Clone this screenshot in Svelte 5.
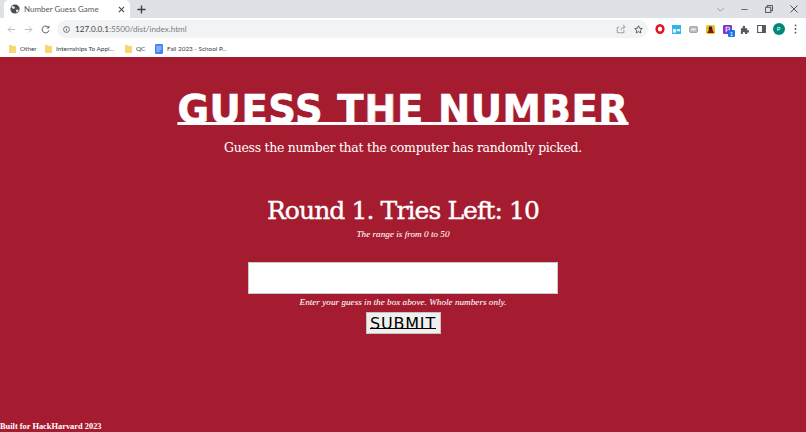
<script>
	const bookmarks = [
		{ label: 'Other', kind: 'folder', width: 36 },
		{ label: 'Internships To Appl...', kind: 'folder', width: 80 },
		{ label: 'QC', kind: 'folder', width: 30 },
		{ label: 'Fall 2023 - School P...', kind: 'doc', width: 80 }
	];
</script>

<div class="window">
	<div class="tabstrip">
		<div class="tab">
			<svg class="globe" viewBox="0 0 12 12" width="10" height="10">
				<circle cx="6" cy="6" r="5.5" fill="#4a4d52" />
				<path d="M3 2.5l2 .5 1 1.5-1 1.5-2-.5-1.5-1.5zM7 7l2.5-.5 1 1-2 3-1-1z" fill="#e8eaed" />
			</svg>
			<span class="tab-title">Number Guess Game</span>
			<svg class="tab-close" viewBox="0 0 8 8" width="7" height="7">
				<path d="M1 1l6 6M7 1L1 7" stroke="#4a4d52" stroke-width="1.3" />
			</svg>
		</div>
		<svg class="new-tab" viewBox="0 0 10 10" width="9" height="9">
			<path d="M5 .5v9M.5 5h9" stroke="#3c4043" stroke-width="1.5" />
		</svg>
		<div class="window-controls">
			<span class="ctl"><svg viewBox="0 0 10 6" width="9" height="5"><path d="M1 1l4 4 4-4" fill="none" stroke="#8a8d91" stroke-width="1" /></svg></span>
			<span class="ctl"><svg viewBox="0 0 8 8" width="7" height="7"><path d="M.5 4h7" stroke="#55585c" stroke-width="1" /></svg></span>
			<span class="ctl"><svg viewBox="0 0 9 9" width="8" height="8"><path d="M.5 2.5h6v6h-6zM2.5 2.5v-2h6v6h-2" fill="none" stroke="#3c4043" stroke-width="1" /></svg></span>
			<span class="ctl"><svg viewBox="0 0 9 9" width="8" height="8"><path d="M.5.5l8 8M8.500.5l-8 8" stroke="#3c4043" stroke-width="1" /></svg></span>
		</div>
	</div>

	<div class="toolbar">
		<span class="nav"><svg viewBox="0 0 12 12" width="9" height="9"><path d="M11 6H1.5M5.5 2L1.5 6l4 4" fill="none" stroke="#b4b7bb" stroke-width="1.2" /></svg></span>
		<span class="nav"><svg viewBox="0 0 12 12" width="9" height="9"><path d="M1 6h9.500M6.500 2l4 4-4 4" fill="none" stroke="#b4b7bb" stroke-width="1.2" /></svg></span>
		<span class="nav"><svg viewBox="0 0 12 12" width="9" height="9"><path d="M10 3.500A4.600 4.600 0 1 0 10.600 7M10.600 1v3H7.600" fill="none" stroke="#55585c" stroke-width="1.3" /></svg></span>
		<div class="omnibox">
			<svg viewBox="0 0 10 10" width="7" height="7"><circle cx="5" cy="5" r="4.200" fill="none" stroke="#55585c" stroke-width="1.1" /><path d="M5 4.400v3M5 2.400v1" stroke="#55585c" stroke-width="1.1" /></svg>
			<span class="url"><span class="host">127.0.0.1</span>:5500/dist/index.html</span>
			<span class="grow"></span>
			<svg class="share" viewBox="0 0 12 12" width="10" height="10"><path d="M9.500 7v3.500h-8V4H4M6 7.500c.3-2.500 2-4 4-4M8.500 1l2.500 2.500-2.500 2.500" fill="none" stroke="#8a8d91" stroke-width="1" /></svg>
			<svg class="star" viewBox="0 0 12 12" width="9" height="9"><path d="M6 1l1.500 3.300 3.500.4-2.600 2.400.7 3.500L6 8.900l-3.100 1.700.7-3.500L1 4.700l3.500-.4z" fill="none" stroke="#3c4043" stroke-width="1.1" /></svg>
		</div>
		<div class="extensions">
			<span class="ext"><svg viewBox="0 0 10 10" width="10" height="10"><ellipse cx="5" cy="5" rx="3.400" ry="3.800" fill="none" stroke="#e0141e" stroke-width="2.4" /></svg></span>
			<span class="ext"><svg viewBox="0 0 10 10" width="9" height="9"><rect width="10" height="10" fill="#35b3ec" /><rect x="1" y="4.500" width="3.500" height="4" fill="#e4f5fd" /><rect x="5.500" y="4.500" width="3.500" height="2.500" fill="#e4f5fd" /></svg></span>
			<span class="ext"><svg viewBox="0 0 10 8" width="9" height="7"><rect x=".5" y=".5" width="9" height="7" rx="1.500" fill="#b9bcc0" stroke="#9a9da1" /><rect x="2.500" y="3" width="5" height="2" fill="#eceef0" /></svg></span>
			<span class="ext"><svg viewBox="0 0 10 10" width="9" height="9"><rect width="10" height="10" rx="2" fill="#e6c21d" /><path d="M1.500 9L4 3.500h2.500L9 9z" fill="#8a1220" /><circle cx="5" cy="3.500" r="2" fill="#2b2020" /></svg></span>
			<span class="ext">
				<svg viewBox="0 0 10 10" width="9" height="9"><rect width="10" height="10" rx="1.500" fill="#7b35c9" /><path d="M3.500 8V2.500H6a1.500 1.500 0 0 1 0 3H3.500" fill="none" stroke="#e9dcf8" stroke-width="1.2" /></svg>
				<span class="badge">1</span>
			</span>
			<span class="ext"><svg viewBox="0 0 10 10" width="9" height="9"><path d="M1 3.500h2V2a1.300 1.300 0 0 1 2.600 0v1.500h2.400v2.300h1a1.300 1.300 0 0 1 0 2.600h-1V10H5.500V9a1.200 1.200 0 0 0-2.400 0v1H1z" fill="#55585c" /></svg></span>
			<span class="ext"><svg viewBox="0 0 10 9" width="9" height="8"><rect x=".6" y=".6" width="8.800" height="7.800" fill="none" stroke="#55585c" stroke-width="1.2" /><rect x="5.500" y="1" width="4" height="7" fill="#55585c" /></svg></span>
			<span class="ext"><span class="avatar">P</span></span>
			<span class="ext"><svg viewBox="0 0 3 11" width="3" height="10"><circle cx="1.500" cy="1.500" r="1" fill="#55585c" /><circle cx="1.500" cy="5.500" r="1" fill="#55585c" /><circle cx="1.500" cy="9.500" r="1" fill="#55585c" /></svg></span>
		</div>
	</div>

	<div class="bookmarks">
		{#each bookmarks as b}
			<span class="bookmark" style="width:{b.width}px">
				{#if b.kind === 'folder'}
					<svg viewBox="0 0 8 10" width="7" height="9"><path d="M0 1h3l1 1h4v8H0z" fill="#f6d86e" /></svg>
				{:else}
					<svg viewBox="0 0 8 10" width="8" height="10"><rect width="8" height="10" rx="1" fill="#4285f4" /><path d="M1.500 3h5M1.500 5h5M1.500 7h3" stroke="#e8f0fe" stroke-width=".8" /></svg>
				{/if}
				{b.label}
			</span>
		{/each}
	</div>

	<main class="page">
		<h1>GUESS T<span class="ghost">H</span>E NUMBER</h1>
		<p class="subtitle">Guess the number that the computer has randomly picked.</p>
		<h2>Round 1. Tries Left: 10</h2>
		<p class="hint">The range is from 0 to 50</p>
		<input class="guess" type="text" aria-label="Your guess" />
		<p class="hint below">Enter your guess in the box above. Whole numbers only.</p>
		<button class="submit">SUBMIT</button>
		<footer>Built for HackHarvard 2023</footer>
	</main>
</div>

<style>
	:global(body) {
		margin: 0;
	}

	.window {
		display: flex;
		flex-direction: column;
		width: 806px;
		height: 432px;
		overflow: hidden;
		font-family: Lato, 'Liberation Sans', sans-serif;
	}

	.tabstrip {
		display: flex;
		align-items: center;
		height: 18px;
		background: #dee1e6;
	}

	.tab {
		display: flex;
		align-items: center;
		width: 126px;
		height: 18px;
		margin-left: 4px;
		padding-left: 6px;
		box-sizing: border-box;
		background: #fff;
		border-radius: 5px 5px 0 0;
	}

	.tab-title {
		margin-left: 4px;
		font-size: 8px;
		color: #55585c;
		white-space: nowrap;
	}

	.tab-close {
		margin-left: auto;
		margin-right: 5px;
	}

	.new-tab {
		margin-left: 7px;
	}

	.window-controls {
		display: flex;
		margin-left: auto;
	}

	.ctl {
		display: flex;
		align-items: center;
		justify-content: center;
		width: 24.5px;
	}

	.toolbar {
		display: flex;
		align-items: center;
		height: 22px;
		padding-left: 3px;
		background: #fff;
	}

	.nav {
		display: flex;
		justify-content: center;
		width: 17px;
	}

	.omnibox {
		display: flex;
		align-items: center;
		gap: 5px;
		width: 591px;
		height: 18px;
		margin-left: 3px;
		padding: 0 5px 0 6px;
		box-sizing: border-box;
		background: #f1f3f4;
		border-radius: 9px;
	}

	.share {
		margin-right: 3px;
	}

	.grow {
		flex: 1;
	}

	.url {
		font-size: 8.1px;
		color: #7a7d81;
	}

	.host {
		color: #3c4043;
	}

	.extensions {
		display: flex;
		margin-left: 3px;
	}

	.ext {
		position: relative;
		display: flex;
		align-items: center;
		justify-content: center;
		width: 17px;
		height: 14px;
	}

	.badge {
		position: absolute;
		right: 1px;
		bottom: -1px;
		width: 7px;
		height: 7px;
		background: #1a73e8;
		border-radius: 1px;
		font-size: 6px;
		line-height: 7px;
		text-align: center;
		color: #fff;
	}

	.avatar {
		width: 12px;
		height: 12px;
		border-radius: 50%;
		background: #00897b;
		font-size: 6px;
		line-height: 12px;
		text-align: center;
		color: #fff;
	}

	.bookmarks {
		display: flex;
		align-items: center;
		height: 17px;
		padding-left: 9px;
		background: #fff;
		font-size: 6.4px;
		color: #3c4043;
	}

	.bookmark {
		display: flex;
		align-items: center;
		flex-shrink: 0;
		gap: 4px;
		white-space: nowrap;
	}

	.page {
		position: relative;
		flex: 1;
		display: flex;
		flex-direction: column;
		align-items: center;
		background: #a51c30;
		color: #fff;
		font-family: 'DejaVu Serif', serif;
	}

	h1 {
		margin: 29px 0 0;
		font-family: 'DejaVu Sans', sans-serif;
		font-size: 38.5px;
		font-weight: 700;
		letter-spacing: 0.6px;
		line-height: 48px;
		white-space: nowrap;
		-webkit-text-stroke: 0.6px #fff;
		text-decoration: underline;
		text-decoration-thickness: 3px;
		text-decoration-skip-ink: none;
		text-underline-offset: -1px;
	}

	.ghost {
		-webkit-text-stroke: 0.6px #e9b9c2;
	}

	.subtitle {
		margin: 5px 0 0;
		font-size: 12.5px;
		letter-spacing: -0.3px;
		line-height: 18px;
	}

	h2 {
		margin: 37px 0 0;
		font-size: 25px;
		font-weight: 400;
		letter-spacing: -0.9px;
		line-height: 34px;
		-webkit-text-stroke: 0.4px #fff;
	}

	.hint {
		margin: 0;
		font-family: 'Liberation Serif', serif;
		font-size: 9.2px;
		font-style: italic;
		line-height: 12px;
		-webkit-text-stroke: 0.05px #fff;
	}

	.guess {
		width: 310px;
		height: 32px;
		margin-top: 22px;
		padding: 0;
		box-sizing: border-box;
		background: #fff;
		border: 1px solid #c9c9c9;
	}

	.below {
		margin-top: 2px;
	}

	.submit {
		width: 75px;
		height: 22px;
		margin-top: 4px;
		padding: 0;
		background: #efefef;
		border: 1px solid #c4c4c4;
		font-family: 'DejaVu Sans', sans-serif;
		font-size: 16px;
		letter-spacing: 0.8px;
		color: #000;
		text-decoration: underline;
		text-decoration-thickness: 1px;
		text-decoration-skip-ink: none;
		text-underline-offset: -1px;
	}

	footer {
		position: absolute;
		left: 0;
		bottom: 0;
		font-family: 'Liberation Serif', serif;
		font-size: 8.4px;
		font-weight: 700;
		line-height: 11px;
	}
</style>
